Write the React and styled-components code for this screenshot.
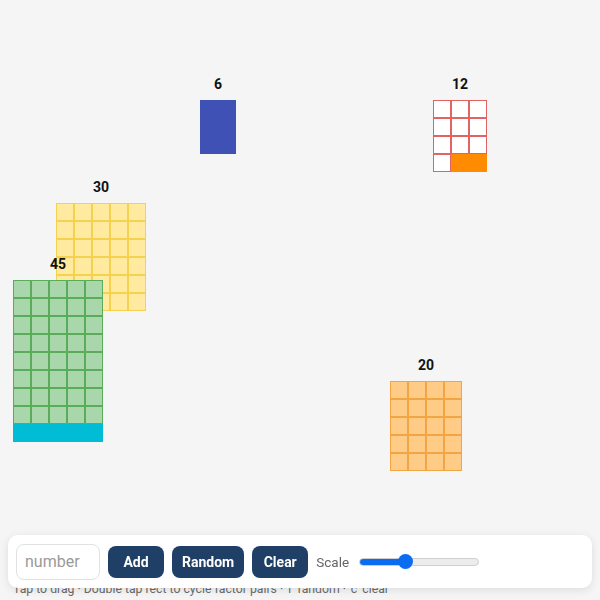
import React from 'react';
import styled, { createGlobalStyle } from 'styled-components';

const CELL = 18;

const rects = [
    { n: 6, x: 200, y: 100, cols: 2, rows: 3, fill: '#3f51b5', line: '#3f51b5' },
    { n: 12, x: 433, y: 100, cols: 3, rows: 4, fill: '#ffffff', line: '#e06464', mark: [10, 11], markColor: '#ff8c00' },
    { n: 30, x: 56, y: 203, cols: 5, rows: 6, fill: '#ffeaa0', line: '#f4d24e' },
    { n: 45, x: 13, y: 280, cols: 5, rows: 9, fill: '#a9d6aa', line: '#58ad5b', mark: [40, 41, 42, 43, 44], markColor: '#00bcd4' },
    { n: 20, x: 390, y: 381, cols: 4, rows: 5, fill: '#ffcc88', line: '#f3a443' },
];

export default () => {
    return (
        <Page>
            <GlobalStyle />
            <Canvas>
                {rects.map((r) => (
                    <RectBlock key={r.n} style={{ left: r.x, top: r.y - 24 }}>
                        <RectLabel>{r.n}</RectLabel>
                        <CellGrid cols={r.cols}>
                            {Array.from({ length: r.cols * r.rows }).map((_, i) => {
                                const marked = r.mark && r.mark.includes(i);
                                return (
                                    <Cell
                                        key={i}
                                        fill={marked ? r.markColor : r.fill}
                                        line={marked ? r.markColor : r.line}
                                    />
                                );
                            })}
                        </CellGrid>
                    </RectBlock>
                ))}
            </Canvas>
            <HelpText>{"Tap to drag · Double tap rect to cycle factor pairs · 'r' random · 'c' clear"}</HelpText>
            <Toolbar>
                <NumberInput type='text' placeholder='number' />
                <ActionButton>{'Add'}</ActionButton>
                <ActionButton>{'Random'}</ActionButton>
                <ActionButton>{'Clear'}</ActionButton>
                <ScaleLabel>{'Scale'}</ScaleLabel>
                <ScaleSlider type='range' min='0' max='100' defaultValue='37' />
            </Toolbar>
        </Page>
    );
};

const GlobalStyle = createGlobalStyle`
    html, body {
        margin: 0;
        padding: 0;
        background: #f5f5f5;
        font-family: Roboto, "Liberation Sans", sans-serif;
    }
`;

const Page = styled.div`
    height: 100vh;
    display: flex;
    flex-direction: column;
    overflow: hidden;
`;

const Canvas = styled.div`
    position: relative;
    flex: 1;
`;

const RectBlock = styled.div`
    position: absolute;
    display: flex;
    flex-direction: column;
    align-items: center;
`;

const RectLabel = styled.div`
    font-size: 14px;
    font-weight: 700;
    line-height: 16px;
    color: #111;
    margin-bottom: 8px;
`;

const CellGrid = styled.div`
    display: grid;
    grid-template-columns: repeat(${(p) => p.cols}, ${CELL}px);
    grid-auto-rows: ${CELL}px;
`;

const Cell = styled.div`
    box-sizing: border-box;
    background: ${(p) => p.fill};
    border: 1px solid ${(p) => p.line};
`;

const HelpText = styled.div`
    font-size: 12.25px;
    line-height: 14px;
    color: #6b6b6b;
    padding: 0 13px 4px;
    white-space: nowrap;
`;

const Toolbar = styled.div`
    position: fixed;
    left: 8px;
    right: 8px;
    bottom: 12px;
    height: 53px;
    box-sizing: border-box;
    padding: 0 8px;
    display: flex;
    align-items: center;
    gap: 8px;
    background: #fff;
    border-radius: 10px;
    box-shadow: 0 2px 8px rgba(0, 0, 0, 0.1);
`;

const NumberInput = styled.input`
    box-sizing: border-box;
    width: 84px;
    height: 36px;
    padding: 0 8px;
    border: 1px solid #e2e2e2;
    border-radius: 8px;
    font-family: inherit;
    font-size: 16px;
    color: #222;
    outline: none;
    &::placeholder {
        color: #9a9a9a;
    }
`;

const ActionButton = styled.button`
    min-width: 56px;
    height: 32px;
    padding: 0 10px;
    border: none;
    border-radius: 8px;
    background: #1f3f66;
    color: #fff;
    font-family: inherit;
    font-size: 14px;
    font-weight: 700;
    cursor: pointer;
`;

const ScaleLabel = styled.span`
    font-size: 13.5px;
    color: #666;
    margin-right: 2px;
`;

const ScaleSlider = styled.input`
    -webkit-appearance: none;
    appearance: none;
    width: 120px;
    height: 8px;
    margin: 0;
    border: 1px solid #cfcfcf;
    border-radius: 4px;
    box-sizing: border-box;
    background: linear-gradient(to right, #0a6cf1 0%, #0a6cf1 37%, #ececec 37%, #ececec 100%);
    &::-webkit-slider-thumb {
        -webkit-appearance: none;
        width: 15px;
        height: 15px;
        border-radius: 50%;
        background: #0a6cf1;
        border: none;
    }
`;
